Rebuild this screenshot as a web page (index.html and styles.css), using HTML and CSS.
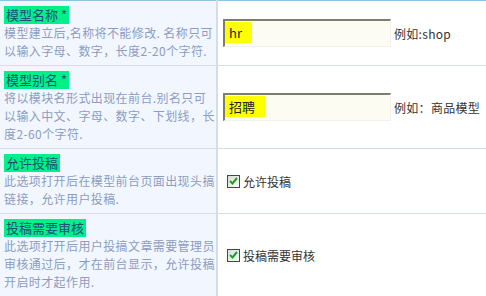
FILE: index.html
```html
<!DOCTYPE html>
<html lang="zh-CN">
<head>
  <meta charset="UTF-8" />
  <title>模型设置</title>
  <link rel="stylesheet" href="styles.css">
</head>
<body>

  <table class="form-table">
    <tr class="row-1">
      <th>
        <span class="field-title">模型名称 *</span>
        <p class="field-tip">模型建立后,名称将不能修改. 名称只可<br>以输入字母、数字，长度2-20个字符.</p>
      </th>
      <td>
        <div class="field-line">
          <div class="text-box"><span class="mark">hr</span></div>
          <span class="example">例如:shop</span>
        </div>
      </td>
    </tr>
    <tr class="row-2">
      <th>
        <span class="field-title">模型别名 *</span>
        <p class="field-tip">将以模块名形式出现在前台.别名只可<br>以输入中文、字母、数字、下划线，长<br>度2-60个字符.</p>
      </th>
      <td>
        <div class="field-line">
          <div class="text-box"><span class="mark">招聘</span></div>
          <span class="example">例如：商品模型</span>
        </div>
      </td>
    </tr>
    <tr class="row-3">
      <th>
        <span class="field-title">允许投稿</span>
        <p class="field-tip">此选项打开后在模型前台页面出现头搞<br>链接，允许用户投稿.</p>
      </th>
      <td>
        <label class="check-line">
          <span class="check-box">
            <svg width="9" height="8" viewBox="0 0 9 8"><path d="M1 4 L3.5 6.5 L8 1" fill="none" stroke="#21a121" stroke-width="2"/></svg>
          </span>
          允许投稿
        </label>
      </td>
    </tr>
    <tr class="row-4">
      <th>
        <span class="field-title">投稿需要审核</span>
        <p class="field-tip">此选项打开后用户投搞文章需要管理员<br>审核通过后，才在前台显示，允许投稿<br>开启时才起作用.</p>
      </th>
      <td>
        <label class="check-line">
          <span class="check-box">
            <svg width="9" height="8" viewBox="0 0 9 8"><path d="M1 4 L3.5 6.5 L8 1" fill="none" stroke="#21a121" stroke-width="2"/></svg>
          </span>
          投稿需要审核
        </label>
      </td>
    </tr>
  </table>

</body>
</html>
```

FILE: styles.css
```css
body {
  margin: 0;
  background: #fff;
  font-family: "Noto Sans CJK SC", "DejaVu Sans", sans-serif;
  font-size: 12px;
  color: #333;
}

.form-table {
  width: 486px;
  border-collapse: collapse;
  border-top: 1px solid #8fc2e4;
}

.form-table th,
.form-table td {
  border-bottom: 1px solid #d5dde9;
  vertical-align: middle;
}

.form-table th {
  width: 212px;
  padding: 5px 0 5px 4px;
  background: #f2f7ff;
  border-right: 2px solid #d5dde9;
  text-align: left;
  font-weight: normal;
  vertical-align: top;
}

.form-table td {
  padding: 0 0 0 5px;
}

.row-1 th { height: 54px; }
.row-2 th { height: 72px; }
.row-3 th { height: 54px; }
.row-4 th { height: 72px; }

.field-title {
  display: block;
  width: fit-content;
  padding: 0 2px;
  background: #00f08c;
  color: #1b4f78;
  font-size: 13px;
  line-height: 18px;
}

.field-tip {
  margin: 0;
  color: #8d9cc1;
  line-height: 18px;
  letter-spacing: 0.4px;
  white-space: nowrap;
}

.field-line {
  display: flex;
  align-items: center;
  gap: 3px;
}

.text-box {
  box-sizing: border-box;
  width: 168px;
  height: 28px;
  padding: 1px 0 3px;
  background: #fcfcf2;
  border-top: 2px solid #7e7e6e;
  border-left: 2px solid #7e7e6e;
  border-right: 1px solid #f2f2ea;
  border-bottom: 1px solid #f2f2ea;
  display: flex;
}

.mark {
  display: flex;
  align-items: center;
  padding: 0 10px 0 4px;
  background: #ffff00;
  color: #222;
  font-size: 13px;
}

.example {
  font-size: 12px;
  letter-spacing: 0.3px;
  color: #333;
}

.check-line {
  display: flex;
  align-items: center;
  gap: 3px;
  padding-left: 4px;
  font-size: 12px;
  color: #333;
}

.check-box {
  box-sizing: border-box;
  width: 13px;
  height: 13px;
  border: 1px solid #1c5180;
  background: linear-gradient(135deg, #dcdcd6, #fbfbf9);
  display: flex;
  align-items: center;
  justify-content: center;
}
```
